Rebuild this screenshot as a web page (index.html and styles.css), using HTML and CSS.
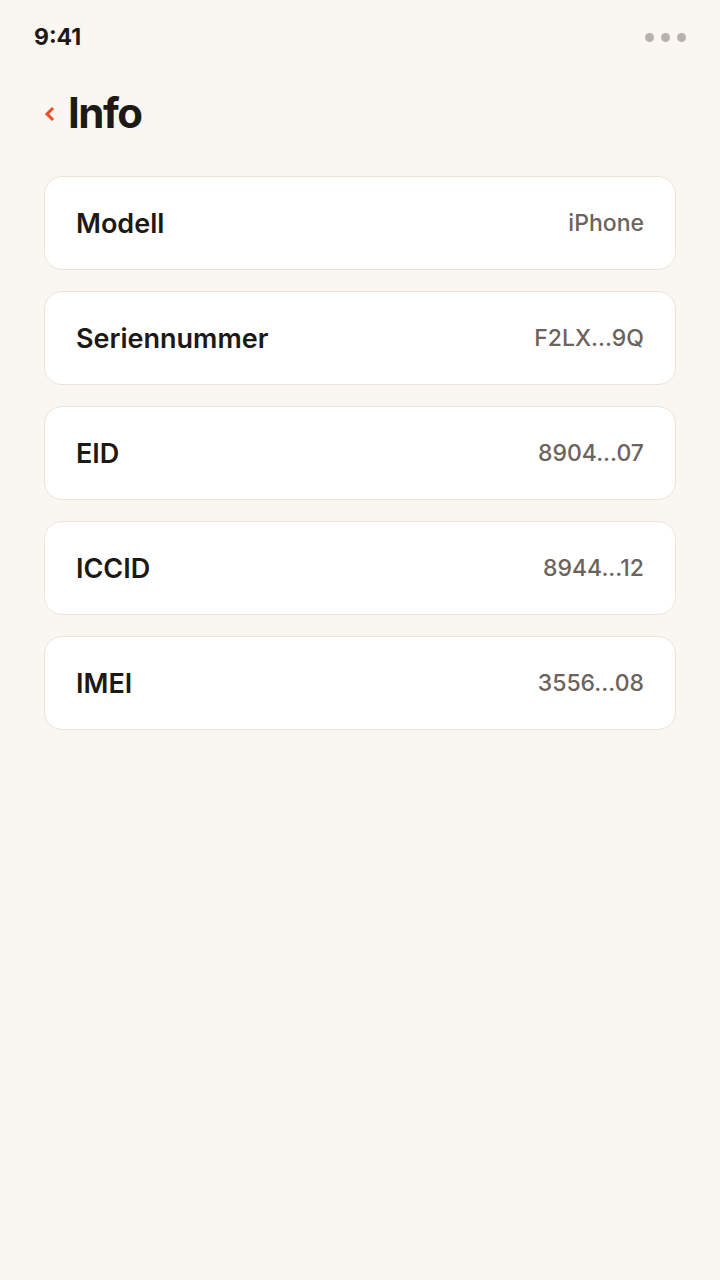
FILE: index.html
```html
<!DOCTYPE html>
<html lang="de">
<head>
<meta charset="utf-8">
<link rel="stylesheet" href="styles.css">
</head>
<body>
<div class="screen">
  <div class="status">
    <span class="time">9:41</span>
    <span class="dots"><i></i><i></i><i></i></span>
  </div>
  <div class="header">
    <svg class="back" width="12" height="16" viewBox="0 0 12 16"><path d="M8 3 L3 8 L8 13" fill="none" stroke="#f04a2a" stroke-width="3" stroke-linecap="square"/></svg>
    <h1>Info</h1>
  </div>
  <div class="list">
    <div class="card"><span class="label">Modell</span><span class="value">iPhone</span></div>
    <div class="card"><span class="label">Seriennummer</span><span class="value">F2LX...9Q</span></div>
    <div class="card"><span class="label">EID</span><span class="value">8904...07</span></div>
    <div class="card"><span class="label">ICCID</span><span class="value">8944...12</span></div>
    <div class="card"><span class="label">IMEI</span><span class="value">3556...08</span></div>
  </div>
</div>
</body>
</html>
```
FILE: styles.css
```css
html, body {
  margin: 0;
  padding: 0;
  background: #faf7f2;
}
body {
  font-family: "Inter", "Noto Sans", sans-serif;
  color: #1c1917;
}
.screen {
  width: 720px;
  min-height: 1280px;
  box-sizing: border-box;
  padding: 0 44px;
}
.status {
  height: 74px;
  display: flex;
  align-items: center;
  justify-content: space-between;
}
.time {
  font-size: 23px;
  font-weight: 700;
  margin-left: -10px;
}
.dots {
  display: flex;
  gap: 7px;
  margin-right: -10px;
}
.dots i {
  width: 9px;
  height: 9px;
  border-radius: 50%;
  background: #b9b2ab;
  display: block;
}
.header {
  display: flex;
  align-items: center;
  gap: 12px;
  height: 76px;
  margin-bottom: 26px;
}
.back {
  display: block;
  margin-top: 4px;
}
h1 {
  margin: 0;
  font-size: 42px;
  font-weight: 700;
  letter-spacing: -1.5px;
}
.list {
  display: flex;
  flex-direction: column;
  gap: 21px;
}
.card {
  height: 94px;
  box-sizing: border-box;
  background: #ffffff;
  border: 1px solid #ebe3d9;
  border-radius: 18px;
  display: flex;
  align-items: center;
  justify-content: space-between;
  padding: 0 31px;
}
.label {
  font-size: 27px;
  font-weight: 600;
}
.value {
  font-size: 23px;
  font-weight: 500;
  color: #6b635c;
}
```
